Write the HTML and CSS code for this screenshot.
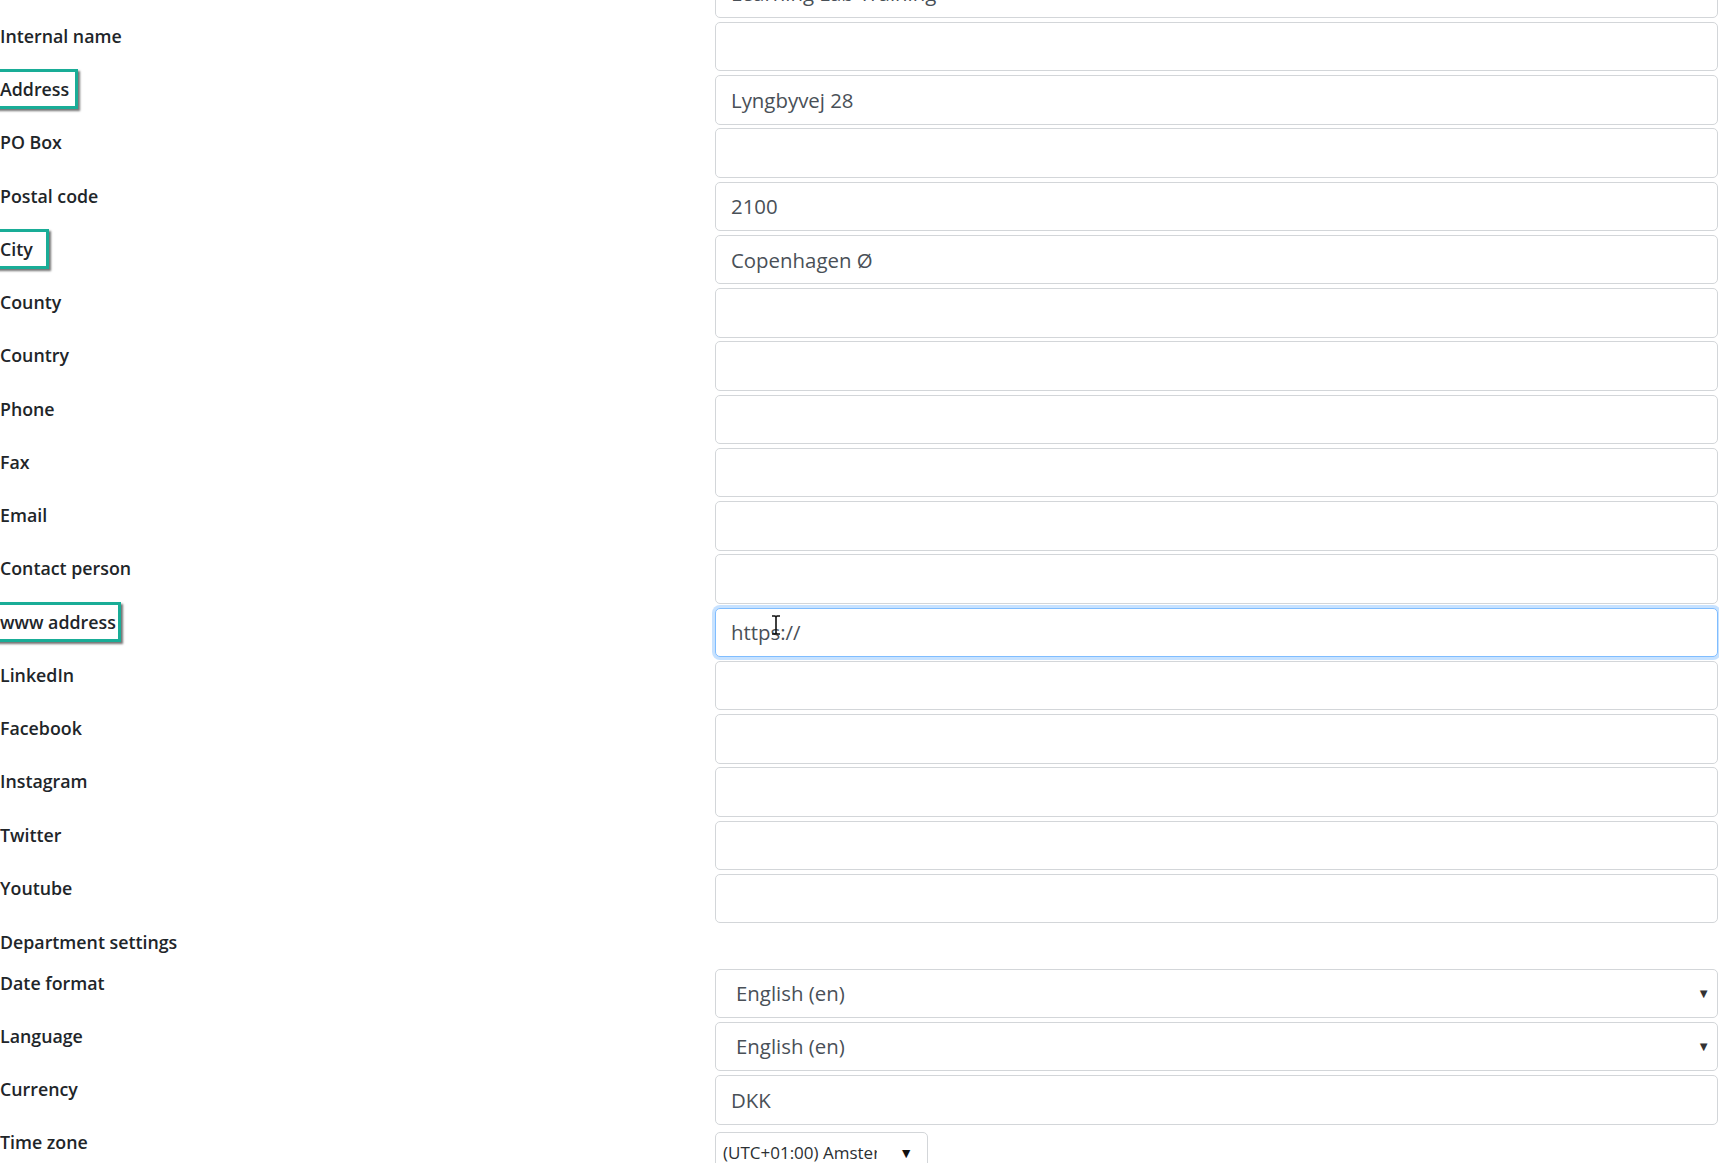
FILE: index.html
```html
<!DOCTYPE html>
<html lang="en">
<head>
  <meta charset="UTF-8">
  <title>Department details</title>
  <link rel="stylesheet" href="styles.css">
</head>
<body>

  <form class="dept-form">
    <div class="form-row">
      <label>Name</label>
      <input type="text" value="Learning Lab Training">
    </div>
    <div class="form-row">
      <label>Internal name</label>
      <input type="text">
    </div>
    <div class="form-row">
      <label><span class="mark">Address</span></label>
      <input type="text" value="Lyngbyvej 28">
    </div>
    <div class="form-row">
      <label>PO Box</label>
      <input type="text">
    </div>
    <div class="form-row">
      <label>Postal code</label>
      <input type="text" value="2100">
    </div>
    <div class="form-row">
      <label><span class="mark mark-wide">City</span></label>
      <input type="text" value="Copenhagen Ø">
    </div>
    <div class="form-row">
      <label>County</label>
      <input type="text">
    </div>
    <div class="form-row">
      <label>Country</label>
      <input type="text">
    </div>
    <div class="form-row">
      <label>Phone</label>
      <input type="text">
    </div>
    <div class="form-row">
      <label>Fax</label>
      <input type="text">
    </div>
    <div class="form-row">
      <label>Email</label>
      <input type="text">
    </div>
    <div class="form-row">
      <label>Contact person</label>
      <input type="text">
    </div>
    <div class="form-row">
      <label><span class="mark mark-tight">www address</span></label>
      <div class="field-wrap">
        <input type="text" class="focused" value="https://">
        <svg class="ibeam" width="10" height="20" viewBox="0 0 10 20">
          <path d="M1 1h3l1 1 1-1h3M5 2v16M1 19h3l1-1 1 1h3" fill="none" stroke="#111" stroke-width="1.6"/>
        </svg>
      </div>
    </div>
    <div class="form-row">
      <label>LinkedIn</label>
      <input type="text">
    </div>
    <div class="form-row">
      <label>Facebook</label>
      <input type="text">
    </div>
    <div class="form-row">
      <label>Instagram</label>
      <input type="text">
    </div>
    <div class="form-row">
      <label>Twitter</label>
      <input type="text">
    </div>
    <div class="form-row">
      <label>Youtube</label>
      <input type="text">
    </div>

    <h4 class="section-title">Department settings</h4>

    <div class="form-row select-row">
      <label>Date format</label>
      <div class="select-wrap">
        <select>
          <option>English (en)</option>
        </select>
      </div>
    </div>
    <div class="form-row select-row">
      <label>Language</label>
      <div class="select-wrap">
        <select>
          <option>English (en)</option>
        </select>
      </div>
    </div>
    <div class="form-row">
      <label>Currency</label>
      <input type="text" value="DKK">
    </div>
    <div class="form-row">
      <label>Time zone</label>
      <div class="select-wrap select-sm">
        <select>
          <option>(UTC+01:00) Amsterdam, Berlin, Bern, Rome, Stockholm, Vienna</option>
        </select>
      </div>
    </div>
  </form>

</body>
</html>
```

FILE: styles.css
```css
* {
  margin: 0;
  padding: 0;
  box-sizing: border-box;
}

html, body {
  overflow: hidden;
  height: 100%;
}

body {
  background-color: #ffffff;
  font-family: "Open Sans", "Segoe UI", sans-serif;
  color: #212529;
}

.dept-form {
  margin-top: -31.3px;
  padding-right: 1px;
}

.form-row {
  display: grid;
  grid-template-columns: 715px 1fr;
  margin-bottom: 3.75px;
}

.form-row label {
  font-size: 17.8px;
  font-weight: 600;
  line-height: 26px;
  padding-top: 1px;
  color: #212529;
}

.form-row input {
  width: 100%;
  height: 49.5px;
  padding: 0 15px;
  font-family: "Open Sans", "Segoe UI", sans-serif;
  font-size: 20.4px;
  color: #495057;
  background-color: #ffffff;
  border: 1px solid #d3d6d9;
  border-radius: 5px;
  outline: none;
}

.form-row input.focused {
  border-color: #80bdff;
  box-shadow: 0 0 0 3px rgba(0, 123, 255, 0.22);
}

.field-wrap {
  position: relative;
}

.ibeam {
  position: absolute;
  left: 56px;
  top: 7px;
}

/* hand-drawn highlight boxes from the tutorial */
.mark {
  display: inline-block;
  margin: -8px 0 -8px -4px;
  padding: 4px 6px 4px 1px;
  border: 3px solid #19ad97;
  box-shadow: 2px 2px 2px rgba(0, 0, 0, 0.55);
}

.mark-wide {
  padding-right: 13px;
}

.mark-tight {
  padding-right: 2px;
}

.section-title {
  font-size: 17.8px;
  font-weight: 600;
  line-height: 26px;
  padding-top: 2px;
  height: 42px;
  color: #212529;
}

.select-row {
  margin-bottom: 4.5px;
}

.select-wrap {
  position: relative;
}

.select-wrap select {
  width: 100%;
  height: 48.5px;
  padding: 0 40px 0 20px;
  font-family: "Open Sans", "Segoe UI", sans-serif;
  font-size: 20.4px;
  color: #495057;
  background-color: #ffffff;
  border: 1px solid #d3d6d9;
  border-radius: 5px;
  appearance: none;
  -webkit-appearance: none;
  outline: none;
}

.select-wrap::after {
  content: "\25BC";
  position: absolute;
  right: 8px;
  top: 50%;
  transform: translateY(-50%);
  font-size: 13px;
  color: #333;
  pointer-events: none;
}

.select-sm {
  width: 213px;
  margin-top: 4px;
}

.select-sm select {
  height: 40px;
  padding: 0 50px 0 7px;
  font-size: 17px;
  color: #2b2f33;
}

.select-sm::after {
  right: 15px;
  font-size: 14px;
  color: #111;
}
```
